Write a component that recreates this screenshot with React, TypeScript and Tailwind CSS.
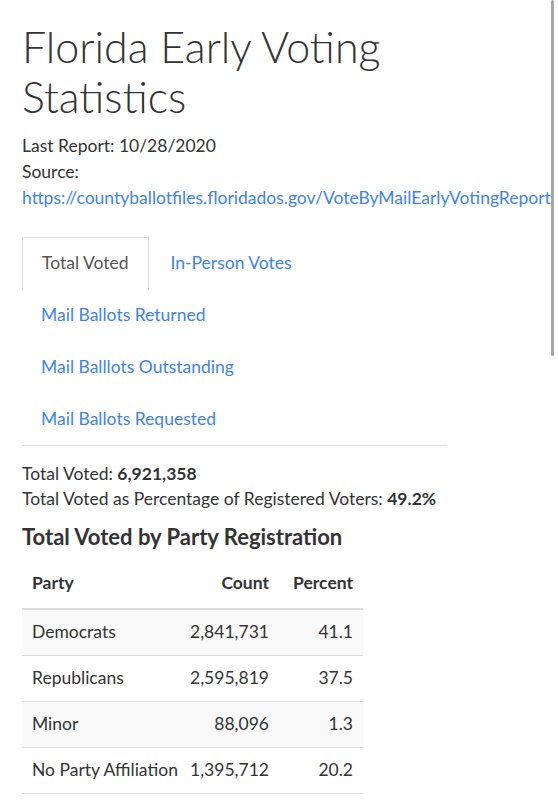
import React from "react";

const rows = [
  { party: "Democrats", count: "2,841,731", pct: "41.1" },
  { party: "Republicans", count: "2,595,819", pct: "37.5" },
  { party: "Minor", count: "88,096", pct: "1.3" },
  { party: "No Party Affiliation", count: "1,395,712", pct: "20.2" },
];

const tabs = ["Mail Ballots Returned", "Mail Balllots Outstanding", "Mail Ballots Requested"];

export default function App() {
  return (
    <div className="relative h-[800px] w-[558px] overflow-hidden bg-white font-['Lato',sans-serif] text-[17.5px] leading-[26px] text-[#333]">
      <div className="px-[22px] pt-[22px]">
        <h1 className="max-w-[480px] text-[43px] font-light leading-[50px] text-[#333]">
          Florida Early Voting Statistics
        </h1>
        <div className="mt-[11px]">
          <p>Last Report: 10/28/2020</p>
          <p>Source:</p>
          <p className="whitespace-nowrap text-[#3f84e5]">
            https://countyballotfiles.floridados.gov/VoteByMailEarlyVotingReport
          </p>
        </div>

        {/* tabs */}
        <ul className="mt-[26px] flex w-[425px] flex-wrap border-b border-[#ddd]">
          <li className="-mb-px border border-b-0 border-[#ddd] bg-white px-[19px] leading-[50px] text-[#555]">
            Total Voted
          </li>
          <li className="px-[22px] leading-[52px] text-[#3f84e5]">In-Person Votes</li>
          {tabs.map((t) => (
            <li key={t} className="w-full px-[19px] leading-[52px] text-[#3f84e5]">
              {t}
            </li>
          ))}
        </ul>

        <div className="mt-[15px]">
          <p>
            Total Voted: <b>6,921,358</b>
          </p>
          <p className="-mt-px">
            Total Voted as Percentage of Registered Voters: <b>49.2%</b>
          </p>
        </div>

        <h3 className="mt-[10px] text-[22px] font-bold leading-[30px]">
          Total Voted by Party Registration
        </h3>

        <table className="mt-[18px] w-[341px] table-fixed border-collapse">
          <colgroup>
            <col className="w-[166px]" />
            <col className="w-[91px]" />
            <col className="w-[84px]" />
          </colgroup>
          <thead>
            <tr className="border-b-2 border-[#ddd] font-bold">
              <th className="px-[10px] pb-[12px] text-left">Party</th>
              <th className="pr-[10px] pb-[12px] text-right">Count</th>
              <th className="px-[10px] pb-[12px] text-right">Percent</th>
            </tr>
          </thead>
          <tbody>
            {rows.map((r, i) => (
              <tr key={r.party} className={`h-[46px] border-b border-[#ddd] ${i % 2 === 0 ? "bg-[#f9f9f9]" : "bg-white"}`}>
                <td className="whitespace-nowrap pl-[10px]">{r.party}</td>
                <td className="pr-[10px] text-right">{r.count}</td>
                <td className="px-[10px] text-right">{r.pct}</td>
              </tr>
            ))}
          </tbody>
        </table>
      </div>

      {/* overlay scrollbar */}
      <div className="absolute right-[4px] top-0 h-[356px] w-[3px] rounded-full bg-[#a6a6a6]" />
    </div>
  );
}
